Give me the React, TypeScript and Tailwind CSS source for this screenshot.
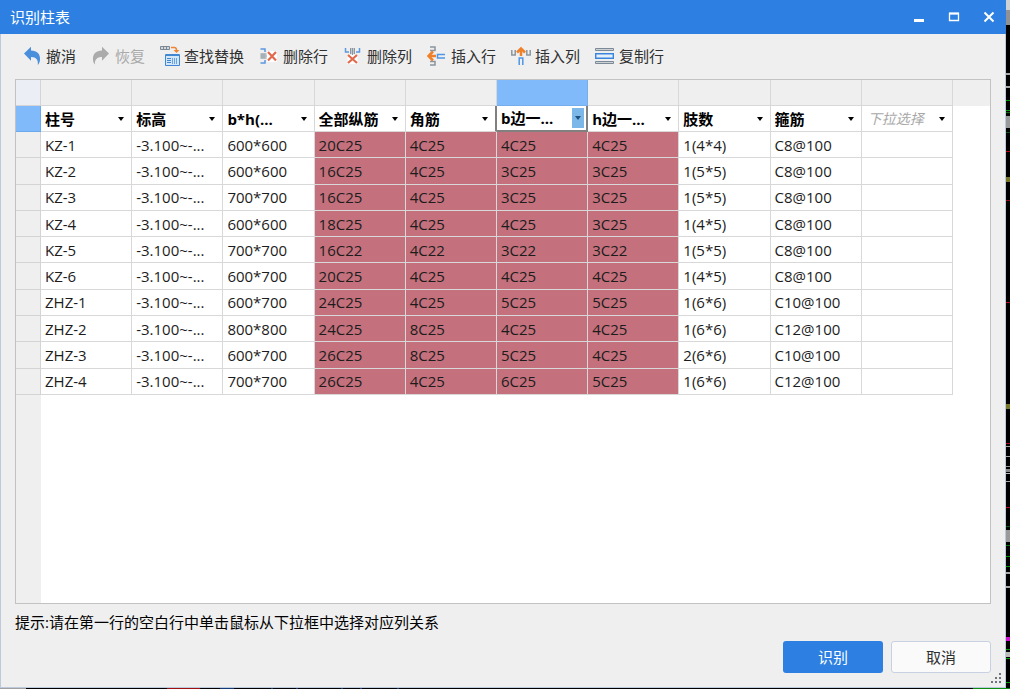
import type { ReactNode } from "react";

const UndoIcon = () => (
  <svg width="20" height="20" viewBox="0 0 20 20" aria-hidden="true">
    <path d="M2 7.500 9 .8v3.700c6 0 9.500 3.500 9 9.500-.2 2-1 3.800-2.200 5 .6-5-1.300-8-6.800-8v3.700z" fill="#4a8fdc" />
  </svg>
);

const RedoIcon = () => (
  <svg width="20" height="20" viewBox="0 0 20 20" aria-hidden="true">
    <path d="M18 7.500 11 .8v3.700C5 4.500 1.500 8 2 14c.2 2 .8 3.400 1.800 4.600C3.700 13.500 6 11 11 11v3.700z" fill="#ababab" />
  </svg>
);

const FindReplaceIcon = () => (
  <svg width="20" height="22" viewBox="0 0 20 22" fill="none" aria-hidden="true">
    <path d="M.5 1.500h9v3h-9z" fill="#d3d8dc" stroke="#7d8893" />
    <path d="M3.500 1.500v3M6.500 1.500v3" stroke="#7d8893" />
    <path d="M11 2.500h3.500q2 0 2 3" stroke="#ee8434" strokeWidth="1.500" />
    <path d="M13.500 5h6l-3 3z" fill="#ee8434" />
    <path d="M5.500 9.500h14v11h-14z" fill="#d3e6fa" stroke="#4287d2" />
    <path d="M6 10.500h13" stroke="#4287d2" />
    <path d="M7 13.500h4M7 15.500h4M7 17.500h4" stroke="#4287d2" />
    <path d="M12.500 13v6M14.500 13v6M16.500 13v6" stroke="#6aa3de" />
  </svg>
);

const DeleteRowIcon = () => (
  <svg width="20" height="20" viewBox="0 0 20 20" fill="none" aria-hidden="true">
    <path d="M1.500 3h4.500v3M1.500 17h4.500v-3" stroke="#5b98e0" strokeWidth="1.500" />
    <path d="M1.500 7.500h5v5h-5z" fill="#c3c9ce" />
    <path d="M1.500 8h6M1.500 10h7M1.500 12h6" stroke="#8b969f" />
    <path d="M8 5h10v11H8z" fill="#fff" />
    <path d="m9 6 8 8.500M17 6l-8 8.500" stroke="#e26a4c" strokeWidth="2.200" />
  </svg>
);

const DeleteColumnIcon = () => (
  <svg width="20" height="20" viewBox="0 0 20 20" fill="none" aria-hidden="true">
    <path d="M2.500 2v4h3.500M16.500 2v4h-3.500" stroke="#5b98e0" strokeWidth="1.500" />
    <path d="M7 2h5v6H7z" fill="#c3c9ce" />
    <path d="M7.500 2v6M9.500 2v7M11.500 2v6" stroke="#8b969f" />
    <path d="M4.500 9h10v9h-10z" fill="#fff" />
    <path d="m5 9 9 8M14 9l-9 8" stroke="#e26a4c" strokeWidth="2.200" />
  </svg>
);

const InsertRowIcon = () => (
  <svg width="20" height="22" viewBox="0 0 20 22" fill="none" aria-hidden="true">
    <path d="M3 2h5v3.500H3M3 20h5v-3.500H3" stroke="#8a959e" strokeWidth="1.500" />
    <path d="M9 11H3" stroke="#f07f2a" strokeWidth="2.500" />
    <path d="M6 6.500 1.500 11 6 15.500" stroke="#f07f2a" strokeWidth="2.500" />
    <path d="M18 9.500h-7.500v3.500H18" stroke="#4f96e6" strokeWidth="1.500" />
  </svg>
);

const InsertColumnIcon = () => (
  <svg width="20" height="20" viewBox="0 0 20 20" fill="none" aria-hidden="true">
    <path d="M.8 4v5h3.400V4M15.800 4v5h3.400V4" stroke="#8a959e" strokeWidth="1.500" />
    <path d="M10 10V4" stroke="#f07f2a" strokeWidth="2.500" />
    <path d="m6 6.500 4-4 4 4" stroke="#f07f2a" strokeWidth="2.500" />
    <path d="M8.200 19v-7h3.600v7" stroke="#4f96e6" strokeWidth="1.500" />
  </svg>
);

const CopyRowIcon = () => (
  <svg width="20" height="20" viewBox="0 0 20 20" fill="none" aria-hidden="true">
    <path d="M.5 2.500h18v2H.5zM.5 15.500h18v2H.5z" fill="#cdd2d6" stroke="#7c8a97" />
    <path d="M.7 7.700h17.600v4.600H.7z" fill="#e6f0fb" stroke="#3b86dd" strokeWidth="1.400" />
  </svg>
);

const tools: { label: string; icon: ReactNode; disabled?: boolean }[] = [
  { label: "撤消", icon: <UndoIcon /> },
  { label: "恢复", icon: <RedoIcon />, disabled: true },
  { label: "查找替换", icon: <FindReplaceIcon /> },
  { label: "删除行", icon: <DeleteRowIcon /> },
  { label: "删除列", icon: <DeleteColumnIcon /> },
  { label: "插入行", icon: <InsertRowIcon /> },
  { label: "插入列", icon: <InsertColumnIcon /> },
  { label: "复制行", icon: <CopyRowIcon /> },
];

const columns = ["柱号", "标高", "b*h(...", "全部纵筋", "角筋", "b边一...", "h边一...", "肢数", "箍筋", "下拉选择"];
const ACTIVE = 5;
const PLACEHOLDER = 9;

const rows = [
  ["KZ-1", "-3.100~-...", "600*600", "20C25", "4C25", "4C25", "4C25", "1(4*4)", "C8@100", ""],
  ["KZ-2", "-3.100~-...", "600*600", "16C25", "4C25", "3C25", "3C25", "1(5*5)", "C8@100", ""],
  ["KZ-3", "-3.100~-...", "700*700", "16C25", "4C25", "3C25", "3C25", "1(5*5)", "C8@100", ""],
  ["KZ-4", "-3.100~-...", "600*600", "18C25", "4C25", "4C25", "3C25", "1(4*5)", "C8@100", ""],
  ["KZ-5", "-3.100~-...", "700*700", "16C22", "4C22", "3C22", "3C22", "1(5*5)", "C8@100", ""],
  ["KZ-6", "-3.100~-...", "600*700", "20C25", "4C25", "4C25", "4C25", "1(4*5)", "C8@100", ""],
  ["ZHZ-1", "-3.100~-...", "600*700", "24C25", "4C25", "5C25", "5C25", "1(6*6)", "C10@100", ""],
  ["ZHZ-2", "-3.100~-...", "800*800", "24C25", "8C25", "4C25", "4C25", "1(6*6)", "C12@100", ""],
  ["ZHZ-3", "-3.100~-...", "600*700", "26C25", "8C25", "5C25", "4C25", "2(6*6)", "C10@100", ""],
  ["ZHZ-4", "-3.100~-...", "700*700", "26C25", "4C25", "6C25", "5C25", "1(6*6)", "C12@100", ""],
];

// Drawing canvas visible past the dialog's right edge: [y, height, colour].
const canvasMarks: [number, number, string][] = [
  [0, 10, "#cfd1d4"], [10, 15, "#8f9194"],
  [73, 2, "#aaa"], [86, 2, "#aaa"], [100, 1, "#0b9a0b"], [110, 1, "#0b9a0b"], [112, 1, "#0b6a0b"],
  [116, 12, "#9a9a9a"], [132, 1, "#0a5a0a"], [151, 1, "#b01010"], [177, 5, "#77772a"], [200, 1, "#8a1010"],
  [302, 1, "#b01010"], [404, 5, "#77772a"], [443, 1, "#b01010"], [446, 1, "#aaa"], [456, 1, "#aaa"],
  [466, 1, "#999"], [469, 3, "#888"], [473, 1, "#bbb"], [481, 1, "#aaa"], [507, 1, "#b01010"],
  [526, 1, "#0a5a0a"], [530, 12, "#9a9a9a"], [545, 1, "#0b7a0b"], [556, 1, "#0b9a0b"], [566, 1, "#0b9a0b"],
  [572, 2, "#aaa"], [586, 2, "#aaa"], [637, 4, "#d010d0"], [649, 1, "#0b9a0b"], [652, 5, "#bbb"],
  [658, 1, "#0b9a0b"], [682, 1, "#0b9a0b"],
];

export default function App() {
  return (
    <div className="flex h-screen flex-col bg-black font-['Open_Sans','Noto_Sans_CJK_SC',sans-serif] text-[15px] leading-5 text-[#1c1c1c]">
      <div className="flex min-h-0 flex-1">
        <main className="relative flex min-w-0 flex-1 flex-col bg-[#efefef]">
          <header className="flex h-[34px] shrink-0 items-center justify-between bg-[#2d80e2] pl-2.5 text-white">
            <h1>识别柱表</h1>
            <div className="flex h-full">
              <button aria-label="最小化" className="flex w-[35px] items-center justify-center">
                <svg width="12" height="12" viewBox="0 0 12 12"><path d="M1 8h10v3H1z" fill="#fff" /></svg>
              </button>
              <button aria-label="最大化" className="flex w-[35px] items-center justify-center">
                <svg width="12" height="12" viewBox="0 0 12 12" fill="none" stroke="#fff"><path d="M1.500 2.500h9v7h-9z" strokeWidth="1.300" /><path d="M1 2.500h10" strokeWidth="2" /></svg>
              </button>
              <button aria-label="关闭" className="flex w-[35px] items-center justify-center">
                <svg width="12" height="12" viewBox="0 0 12 12" stroke="#fff" strokeWidth="2"><path d="m1.500 1.500 9 9M10.500 1.500l-9 9" /></svg>
              </button>
            </div>
          </header>

          <div className="flex min-h-0 flex-1 flex-col border-x border-b border-[#bccadc]">
            <div role="toolbar" className="flex h-[45px] shrink-0 items-center gap-[15px] pb-0.5 pl-[21px]">
              {tools.map((t) => (
                <button
                  key={t.label}
                  disabled={t.disabled}
                  className="flex shrink-0 items-center gap-1 whitespace-nowrap text-[#303030] disabled:text-[#aaaaaa]"
                >
                  {t.icon}
                  {t.label}
                </button>
              ))}
            </div>

            <div className="mx-3.5 flex min-h-0 flex-1 flex-col overflow-hidden border border-[#c2c2c2] bg-white">
              <table className="h-[315px] w-full shrink-0 table-fixed border-separate border-spacing-0 text-left">
                <colgroup>
                  <col className="w-[25px]" />
                  {columns.map((c) => <col key={c} />)}
                  <col className="w-[37px]" />
                </colgroup>
                <thead>
                  <tr className="h-[26px] bg-[#efefef]">
                    <td className="border-r border-b border-[#d4d4d4] bg-[#ebeff5] p-0" />
                    {columns.map((c, i) => (
                      <td
                        key={c}
                        className={`border-r border-b p-0 ${i === ACTIVE ? "border-[#75aeea] bg-[#80bafa]" : "border-[#d8d8d8]"}`}
                      />
                    ))}
                    <td className="p-0" />
                  </tr>
                  <tr className="h-[26px]">
                    <td className="border-r border-b border-[#6aa9ee] bg-[#80bafa] p-0" />
                    {columns.map((c, i) => (
                      <th
                        key={c}
                        className={`p-0 ${
                          i === ACTIVE
                            ? "border-r-2 border-b-2 border-[#808080]"
                            : i === ACTIVE - 1
                              ? "border-r-2 border-b border-r-[#808080] border-b-[#d8d8d8]"
                              : "border-r border-b border-[#d8d8d8]"
                        }`}
                      >
                        <div className="relative flex items-center">
                          <select
                            aria-label={c}
                            className={`h-5 w-full appearance-none bg-transparent outline-none ${
                              i === PLACEHOLDER ? "pl-1.5 text-sm font-normal text-[#a8a8a8] italic" : "pl-1 font-bold text-black"
                            }`}
                          >
                            <option>{c}</option>
                          </select>
                          <span
                            className={`pointer-events-none absolute flex h-5 w-3 items-center justify-center ${
                              i === ACTIVE ? "right-0.5 bg-[#7bb7e8] text-[#1f4f7c]" : "right-1 text-black"
                            }`}
                          >
                            <svg width="6" height="4" viewBox="0 0 6 4"><path d="M0 0h6L3 4z" fill="currentColor" /></svg>
                          </span>
                        </div>
                      </th>
                    ))}
                    <td className="p-0" />
                  </tr>
                </thead>
                <tbody>
                  {rows.map((row) => (
                    <tr key={row[0]}>
                      <td className="border-r border-b border-[#d4d4d4] bg-[#efefef] p-0" />
                      {row.map((cell, i) => (
                        <td
                          key={i}
                          className={`overflow-hidden border-r border-b border-[#d8d8d8] py-0 pr-0 pl-1 whitespace-nowrap ${
                            i > 2 && i < 7 ? "bg-[#c4717d]" : ""
                          }`}
                        >
                          {cell}
                        </td>
                      ))}
                      <td className="p-0" />
                    </tr>
                  ))}
                </tbody>
              </table>
              <div className="w-[25px] flex-1 bg-[#efefef]" />
            </div>

            <p className="flex h-[37px] shrink-0 items-center px-3.5 pb-0.5 text-black">
              提示:请在第一行的空白行中单击鼠标从下拉框中选择对应列关系
            </p>
            <div className="flex shrink-0 justify-end gap-2 px-3.5 pb-3.5">
              <button className="h-8 w-[100px] rounded-[3px] bg-[#2d80e2] text-white">识别</button>
              <button className="h-8 w-[100px] rounded-[3px] border border-[#c8d1e2] bg-[#fafafa] text-[#303030]">取消</button>
            </div>
          </div>
          <svg className="absolute right-1 bottom-1" width="11" height="11" viewBox="0 0 11 11" fill="#6f747c" aria-hidden="true">
            <path d="M8 0h2v2H8zM8 4h2v2H8zM8 8h2v2H8zM4 4h2v2H4zM4 8h2v2H4zM0 8h2v2H0z" />
          </svg>
        </main>
        <svg className="w-1 shrink-0" height="688" viewBox="0 0 4 688" preserveAspectRatio="none" aria-hidden="true">
          {canvasMarks.map(([y, h, fill]) => <rect key={y} x="0" y={y} width="4" height={h} fill={fill} />)}
        </svg>
      </div>
      <svg className="h-px w-full shrink-0" viewBox="0 0 1010 1" preserveAspectRatio="none" aria-hidden="true">
        <path d="M0 0h26v1H0z" fill="#a0a0a0" />
        <path d="M167 0h33v1h-33z" fill="#a01010" />
        <path d="M220 0h14v1h-14zM271 0h2v1h-2zM296 0h2v1h-2zM341 0h2v1h-2zM360 0h2v1h-2zM397 0h2v1h-2z" fill="#123a78" />
        <path d="M973 0h37v1h-37z" fill="#0b8a0b" />
      </svg>
    </div>
  );
}
